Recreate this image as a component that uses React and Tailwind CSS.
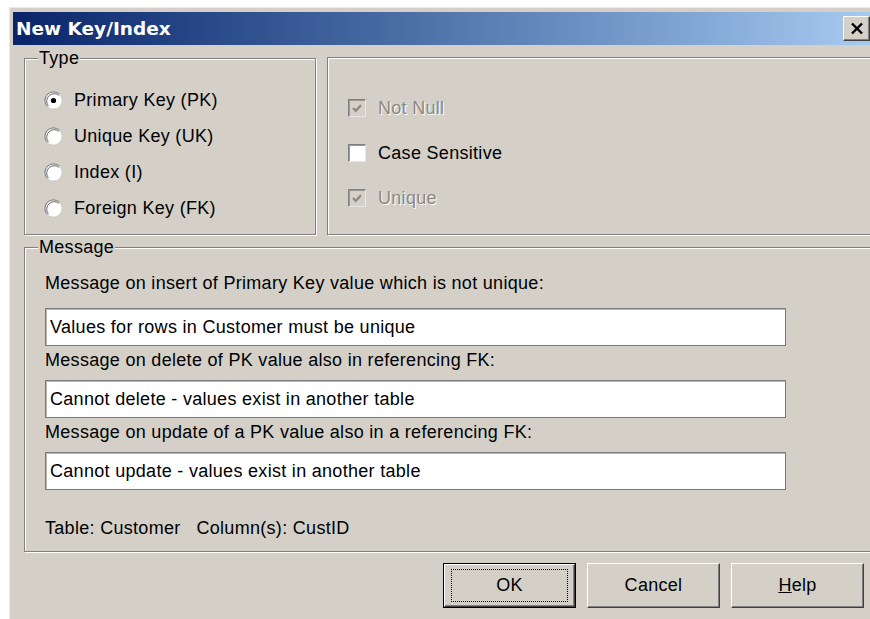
import React from "react";

const FONT = "font-['Liberation_Sans',Arial,sans-serif] tracking-[0.3px]";

function Radio({ checked }) {
  return (
    <svg width="19" height="19" viewBox="0 0 19 19" className="shrink-0">
      <circle cx="9.5" cy="9.5" r="8.6" fill="#fff" />
      <path d="M3.4 15.6 A8.6 8.6 0 0 1 15.6 3.4" fill="none" stroke="#8a8a8a" strokeWidth="1.2" />
      <path d="M4.3 14.7 A7.4 7.4 0 0 1 14.7 4.3" fill="none" stroke="#555" strokeWidth="0.9" />
      <path d="M15.6 3.4 A8.6 8.6 0 0 1 3.4 15.6" fill="none" stroke="#c8c6c0" strokeWidth="0.8" />
      {checked && <circle cx="9.5" cy="9.5" r="2.6" fill="#000" />}
    </svg>
  );
}

function Check({ checked, disabled }) {
  return (
    <span
      className={`flex h-[18px] w-[18px] shrink-0 items-center justify-center border border-t-[#808080] border-l-[#808080] border-b-[#e8e6e2] border-r-[#e8e6e2] shadow-[inset_1px_1px_0_#9a9894] ${
        disabled ? "bg-[#d4d0c8]" : "bg-white"
      }`}
    >
      {checked && (
        <svg width="12" height="12" viewBox="0 0 12 12">
          <path
            d="M2 6 L4.8 8.8 L10 3.2"
            fill="none"
            stroke={disabled ? "#8a8884" : "#000"}
            strokeWidth="2.2"
          />
        </svg>
      )}
    </span>
  );
}

function GroupBox({ title, className, children }) {
  return (
    <div
      className={`relative border border-[#808080] shadow-[inset_1px_1px_0_#fff,1px_1px_0_#fff] ${className}`}
    >
      {title && (
        <span className="absolute -top-[11px] left-[13px] bg-[#d4d0c8] px-[1px] text-[18px] leading-[20px] text-black">
          {title}
        </span>
      )}
      {children}
    </div>
  );
}

function Field({ label, value, first }) {
  return (
    <div className="flex flex-col">
      <div className={`text-[18px] leading-[20px] text-black ${first ? "mb-[15px]" : "mb-[10px]"}`}>
        {label}
      </div>
      <div className="flex h-[38px] w-[741px] items-center border border-[#7a7a7a] bg-white pl-[4px] text-[18px] leading-[20px] text-black shadow-[inset_1px_1px_0_#b8b6b0]">
        {value}
      </div>
    </div>
  );
}

function Button({ children, isDefault }) {
  if (isDefault) {
    return (
      <div className="h-[45px] w-[133px] border border-black">
        <div className="flex h-full w-full items-center justify-center border border-t-white border-l-white border-b-[#404040] border-r-[#404040] bg-[#d4d0c8] shadow-[inset_-1px_-1px_0_#808080]">
          <div className="flex h-[33px] w-[117px] items-center justify-center border border-dotted border-black text-[18px] text-black">
            {children}
          </div>
        </div>
      </div>
    );
  }
  return (
    <div className="flex h-[45px] w-[133px] items-center justify-center border border-t-white border-l-white border-b-[#404040] border-r-[#404040] bg-[#d4d0c8] text-[18px] text-black shadow-[inset_-1px_-1px_0_#808080]">
      {children}
    </div>
  );
}

export default function App() {
  const types = [
    { label: "Primary Key (PK)", checked: true },
    { label: "Unique Key (UK)" },
    { label: "Index (I)" },
    { label: "Foreign Key (FK)" },
  ];
  const options = [
    { label: "Not Null", checked: true, disabled: true },
    { label: "Case Sensitive" },
    { label: "Unique", checked: true, disabled: true },
  ];

  return (
    <div className={`h-[619px] w-[870px] overflow-hidden bg-white ${FONT}`}>
      <div className="ml-[9px] mt-[7px] w-[900px] border-l border-t border-[#eceae6] bg-[#d4d0c8] pl-[3px] pt-[4px] pb-[20px]">
        {/* caption bar */}
        <div className="flex h-[33px] w-[857px] items-center justify-between bg-gradient-to-r from-[#0a246a] to-[#a6caf0] pl-[3px] pr-0">
          <span className="font-['DejaVu_Sans',Verdana,sans-serif] text-[18.5px] font-bold tracking-normal text-white">
            New Key/Index
          </span>
          <span className="flex h-[25px] w-[27px] items-center justify-center border border-t-white border-l-white border-b-[#404040] border-r-[#404040] bg-[#d4d0c8] shadow-[inset_-1px_-1px_0_#808080]">
            <svg width="14" height="13" viewBox="0 0 14 13">
              <path d="M2 1.5 L12 11.5 M12 1.5 L2 11.5" stroke="#000" strokeWidth="2.4" />
            </svg>
          </span>
        </div>

        <div className="flex flex-col pl-[11px] pt-[12px]">
          <div className="flex gap-[11px]">
            <GroupBox title="Type" className="mt-[1px] h-[177px] w-[292px]">
              <div className="flex flex-col gap-[16px] pl-[19px] pt-[31px]">
                {types.map((t) => (
                  <div key={t.label} className="flex h-[20px] items-center gap-[11px] text-[18px] leading-[20px] text-black">
                    <Radio checked={t.checked} />
                    <span>{t.label}</span>
                  </div>
                ))}
              </div>
            </GroupBox>
            <GroupBox className="h-[178px] flex-1">
              <div className="flex flex-col gap-[25px] pl-[20px] pt-[40px]">
                {options.map((o) => (
                  <div key={o.label} className="flex h-[20px] items-center gap-[12px] text-[18px] leading-[20px]">
                    <Check checked={o.checked} disabled={o.disabled} />
                    <span
                      className={
                        o.disabled
                          ? "text-[#8a8884] [text-shadow:1px_1px_0_#fff]"
                          : "text-black"
                      }
                    >
                      {o.label}
                    </span>
                  </div>
                ))}
              </div>
            </GroupBox>
          </div>

          <GroupBox title="Message" className="mt-[12px] h-[305px] w-[880px]">
            <div className="flex flex-col gap-[4px] pl-[20px] pt-[25px]">
              <Field
                first
                label="Message on insert of Primary Key value which is not unique:"
                value="Values for rows in Customer must be unique"
              />
              <Field
                label="Message on delete of PK value also in referencing FK:"
                value="Cannot delete - values exist in another table"
              />
              <Field
                label="Message on update of a PK value also in a referencing FK:"
                value="Cannot update - values exist in another table"
              />
              <div className="mt-[24px] text-[18px] leading-[20px] text-black">
                Table: Customer&nbsp;&nbsp;&nbsp;Column(s): CustID
              </div>
            </div>
          </GroupBox>

          <div className="ml-[419px] mt-[11px] flex gap-[11px]">
            <Button isDefault>OK</Button>
            <Button>Cancel</Button>
            <Button>
              <span>
                <span className="underline">H</span>elp
              </span>
            </Button>
          </div>
        </div>
      </div>
    </div>
  );
}
